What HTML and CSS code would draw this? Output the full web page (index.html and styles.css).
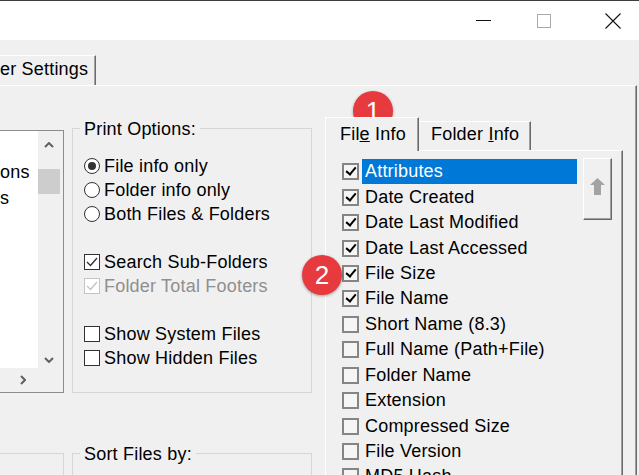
FILE: index.html
```html
<!DOCTYPE html>
<html lang="en">
<head>
  <meta charset="UTF-8" />
  <title>Print Settings</title>
  <link rel="stylesheet" href="styles.css">
</head>
<body>
  <div class="window">
    <div class="titlebar">
      <span class="cap-min"></span>
      <span class="cap-max"></span>
      <svg class="cap-close" viewBox="0 0 16 16"><path d="M0.5 0.5 L15.5 15.5 M15.5 0.5 L0.5 15.5" stroke="#111" stroke-width="1.1" fill="none"/></svg>
    </div>

    <div class="outer-tabs">
      <div class="outer-tab">er Settings</div>
    </div>

    <div class="outer-panel">
      <div class="col-left">
        <div class="listbox">
          <ul class="lb-items">
            <li>ons</li>
            <li>s</li>
          </ul>
          <div class="vscroll">
            <div class="sb-btn sb-up"><svg width="10" height="6" viewBox="0 0 10 6"><polyline points="1,5 5,1 9,5" fill="none" stroke="#606060" stroke-width="2"/></svg></div>
            <div class="sb-thumb"></div>
            <div class="sb-btn sb-down"><svg width="10" height="6" viewBox="0 0 10 6"><polyline points="1,1 5,5 9,1" fill="none" stroke="#606060" stroke-width="2"/></svg></div>
          </div>
          <div class="hscroll"><svg width="6" height="10" viewBox="0 0 6 10"><polyline points="1,1 5,5 1,9" fill="none" stroke="#606060" stroke-width="2"/></svg></div>
          <div class="sb-corner"></div>
        </div>
        <div class="group group-left"></div>
      </div>

      <div class="col-mid">
        <div class="group print-options">
          <div class="group-title">Print Options:</div>
          <div class="options">
            <div class="opt"><span class="radio on"></span>File info only</div>
            <div class="opt"><span class="radio"></span>Folder info only</div>
            <div class="opt"><span class="radio"></span>Both Files &amp; Folders</div>

            <div class="opt opt-gap"><span class="check"><svg viewBox="0 0 14 14"><polyline points="2,7 5.5,10.5 12,3" fill="none" stroke="#333" stroke-width="1.4"/></svg></span>Search Sub-Folders</div>
            <div class="opt disabled"><span class="check"><svg viewBox="0 0 14 14"><polyline points="2,7 5.5,10.5 12,3" fill="none" stroke="#c4c4c4" stroke-width="1.4"/></svg></span>Folder Total Footers</div>

            <div class="opt opt-gap"><span class="check"></span>Show System Files</div>
            <div class="opt"><span class="check"></span>Show Hidden Files</div>
          </div>
        </div>
        <div class="group sort-files">
          <div class="group-title">Sort Files by:</div>
        </div>
      </div>

      <div class="col-right">
        <div class="tabs">
          <div class="tab active">Fil<u>e</u> Info</div>
          <div class="tab">Folder <u>I</u>nfo</div>
        </div>
        <div class="tab-panel">
          <div class="fields">
            <ul class="field-list">
              <li class="field selected"><span class="chk3d on"></span><span class="field-label">Attributes</span></li>
              <li class="field"><span class="chk3d on"></span><span class="field-label">Date Created</span></li>
              <li class="field"><span class="chk3d on"></span><span class="field-label">Date Last Modified</span></li>
              <li class="field"><span class="chk3d on"></span><span class="field-label">Date Last Accessed</span></li>
              <li class="field"><span class="chk3d on"></span><span class="field-label">File Size</span></li>
              <li class="field"><span class="chk3d on"></span><span class="field-label">File Name</span></li>
              <li class="field"><span class="chk3d"></span><span class="field-label">Short Name (8.3)</span></li>
              <li class="field"><span class="chk3d"></span><span class="field-label">Full Name (Path+File)</span></li>
              <li class="field"><span class="chk3d"></span><span class="field-label">Folder Name</span></li>
              <li class="field"><span class="chk3d"></span><span class="field-label">Extension</span></li>
              <li class="field"><span class="chk3d"></span><span class="field-label">Compressed Size</span></li>
              <li class="field"><span class="chk3d"></span><span class="field-label">File Version</span></li>
              <li class="field"><span class="chk3d"></span><span class="field-label">MD5 Hash</span></li>
            </ul>
            <button class="move-up"><svg width="15" height="17" viewBox="0 0 15 17"><polygon points="7.5,0 15,7 11,7 11,17 4,17 4,7 0,7" fill="#a3a3a3"/></svg></button>
          </div>
        </div>
      </div>
    </div>

    <span class="badge badge-1">1</span>
    <span class="badge badge-2">2</span>
  </div>
</body>
</html>
```

FILE: styles.css
```css
body {
  margin: 0;
  font-family: "Liberation Sans", Arial, sans-serif;
  font-size: 18px;
  letter-spacing: 0.2px;
  color: #000;
  background: #f0f0f0;
}
.window {
  position: relative;
  width: 639px;
  height: 475px;
  overflow: hidden;
  background: #f0f0f0;
}

/* title bar */
.titlebar {
  height: 39px;
  border-top: 1px solid #3c3c3c;
  background: #fff;
  display: flex;
  align-items: center;
  justify-content: flex-end;
  padding-right: 18px;
}
.cap-min {
  width: 15px;
  height: 1px;
  background: #111;
  margin-right: 46px;
}
.cap-max {
  width: 12px;
  height: 12px;
  border: 1px solid #a8a8a8;
  margin-right: 54px;
}
.cap-close {
  width: 16px;
  height: 16px;
}

/* outer tab control */
.outer-tabs {
  display: flex;
  margin-top: 15px;
  height: 30px;
}
.outer-tab {
  box-sizing: border-box;
  width: 108px;
  margin-left: -12px;
  padding-left: 12px;
  border-top: 1px solid #fff;
  border-right: 1px solid #6d6d6d;
  box-shadow: inset -1px 0 #a0a0a0;
  line-height: 27px;
  white-space: nowrap;
}
.outer-panel {
  box-sizing: border-box;
  width: 637px;
  height: 400px;
  border-top: 1px solid #fff;
  border-right: 1px solid #696969;
  box-shadow: inset -1px 0 #a0a0a0;
  display: flex;
  align-items: flex-start;
}

/* left list box */
.col-left {
  width: 64px;
  flex: none;
  margin-top: 44px;
}
.listbox {
  box-sizing: border-box;
  width: 66px;
  height: 263px;
  margin-left: -2px;
  border: 1px solid #8c8c8c;
  background: #fff;
  display: grid;
  grid-template-columns: 39px 25px;
  grid-template-rows: 237px 24px;
}
.lb-items {
  list-style: none;
  margin: 0;
  padding: 28px 0 0 1px;
}
.lb-items li {
  height: 26px;
  line-height: 26px;
}
.vscroll {
  background: #f0f0f0;
  display: flex;
  flex-direction: column;
  align-items: center;
  padding-right: 3px;
}
.sb-btn {
  width: 22px;
  display: flex;
  align-items: center;
  justify-content: center;
}
.sb-up { height: 28px; }
.sb-down { height: 16px; margin-top: auto; }
.sb-thumb {
  width: 22px;
  height: 25px;
  margin-top: 10px;
  background: #cdcdcd;
}
.hscroll {
  background: #f0f0f0;
  display: flex;
  align-items: center;
  justify-content: flex-end;
  padding-right: 12px;
}
.sb-corner { background: #f0f0f0; }

/* group boxes */
.group {
  box-sizing: border-box;
  border: 1px solid #d6d6d6;
}
.group-title {
  display: table;
  margin: -11px 0 0 -4px;
  padding: 0 4px;
  line-height: 22px;
  background: #f0f0f0;
}
.group-left {
  width: 66px;
  height: 100px;
  margin: 60px 0 0 -2px;
}
.col-mid {
  width: 240px;
  flex: none;
  margin: 42px 0 0 8px;
}
.print-options {
  height: 265px;
  padding-left: 11px;
}
.sort-files {
  height: 100px;
  margin-top: 60px;
  padding-left: 11px;
}
.options { margin-top: 14px; }
.opt {
  display: flex;
  align-items: center;
  gap: 4px;
  height: 24px;
  white-space: nowrap;
}
.opt-gap { margin-top: 24px; }
.opt.disabled { color: #8f8f8f; }
.radio {
  box-sizing: border-box;
  width: 16px;
  height: 16px;
  flex: none;
  border: 1px solid #333;
  border-radius: 50%;
  background: #fff;
  display: flex;
  align-items: center;
  justify-content: center;
}
.radio.on::after {
  content: "";
  width: 8px;
  height: 8px;
  border-radius: 50%;
  background: #333;
}
.check {
  box-sizing: border-box;
  width: 16px;
  height: 16px;
  flex: none;
  border: 1px solid #333;
  background: #fff;
  display: flex;
  align-items: center;
  justify-content: center;
}
.check svg { width: 14px; height: 14px; }
.opt.disabled .check { border-color: #c4c4c4; }

/* inner tab control */
.col-right {
  width: 298px;
  flex: none;
  margin: 31px 0 0 13px;
}
.tabs {
  display: flex;
  align-items: flex-end;
  height: 33px;
  position: relative;
  z-index: 1;
}
.tab {
  box-sizing: border-box;
  width: 112px;
  height: 29px;
  padding-left: 12px;
  border-top: 1px solid #fff;
  border-right: 1px solid #696969;
  box-shadow: inset -1px 0 #a0a0a0;
  line-height: 25px;
  background: #f0f0f0;
}
.tab.active {
  width: 94px;
  height: 34px;
  margin-bottom: -1px;
  padding-left: 14px;
  border-left: 1px solid #fff;
  line-height: 33px;
}
.tab-panel {
  box-sizing: border-box;
  height: 400px;
  padding: 8px 0 0 16px;
  border-top: 1px solid #fff;
  border-left: 1px solid #fff;
  border-right: 1px solid #696969;
  box-shadow: inset -1px 0 #a0a0a0;
}
.fields {
  display: flex;
  align-items: flex-start;
  gap: 6px;
}
.field-list {
  list-style: none;
  margin: 0;
  padding: 0;
  width: 235px;
}
.field {
  display: flex;
  align-items: center;
  height: 25.45px;
}
.chk3d {
  box-sizing: border-box;
  width: 17px;
  height: 17px;
  flex: none;
  border: 2px solid #858585;
  background: #f5f5f5;
  display: flex;
  align-items: center;
  justify-content: center;
}
.chk3d.on::after {
  content: "";
  width: 4px;
  height: 8px;
  margin-top: -3px;
  border: solid #000;
  border-width: 0 2.5px 2.5px 0;
  transform: rotate(40deg);
}
.field-label {
  box-sizing: border-box;
  width: 215px;
  height: 25px;
  margin-left: 3px;
  padding-left: 3px;
  line-height: 25px;
  white-space: nowrap;
}
.field.selected .field-label {
  background: #0078d7;
  color: #fff;
}
.move-up {
  box-sizing: border-box;
  width: 29px;
  height: 62px;
  margin-top: -1px;
  padding: 0 0 6px;
  border: none;
  border-top: 1px solid #fff;
  border-left: 1px solid #fff;
  border-right: 1px solid #696969;
  border-bottom: 1px solid #696969;
  box-shadow: inset -1px -1px #a0a0a0;
  background: #f0f0f0;
  display: flex;
  align-items: center;
  justify-content: center;
}

/* callout markers */
.badge {
  position: absolute;
  width: 40px;
  height: 40px;
  border-radius: 50%;
  background: #e63a3f;
  color: #fff;
  font-size: 26px;
  line-height: 40px;
  text-align: center;
  letter-spacing: 0;
  box-shadow: 0 1px 3px rgba(0, 0, 0, 0.35);
}
.badge-1 { left: 353px; top: 91px; }
.badge-2 { left: 302px; top: 255px; }
```
